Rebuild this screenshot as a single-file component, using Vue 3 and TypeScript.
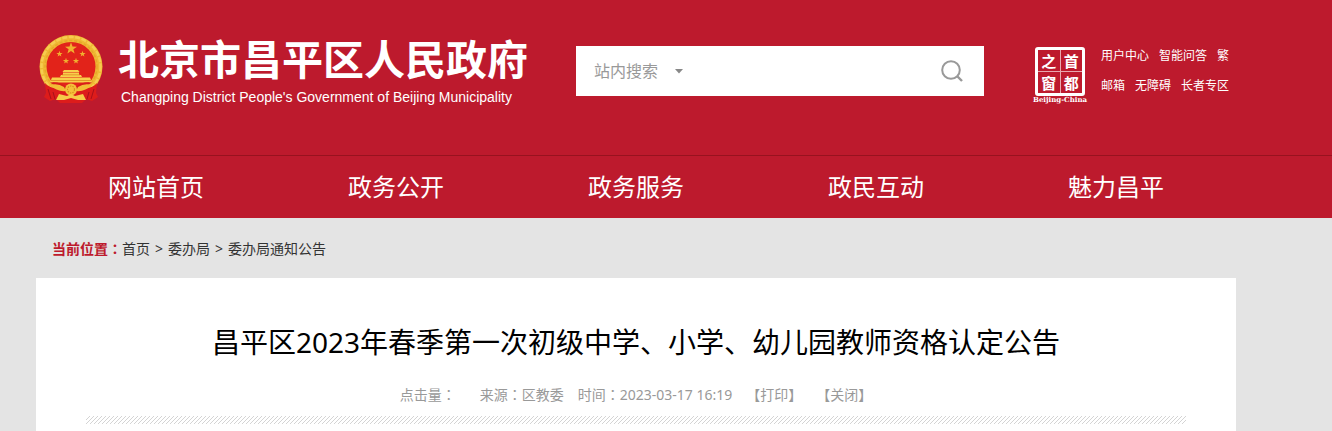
<script setup lang="ts">
import { ref } from 'vue'

interface Crumb {
  label: string
  href: string
}

const scope = ref('site')
const keyword = ref('')

const toolRows: string[][] = [
  ['用户中心', '智能问答', '繁'],
  ['邮箱', '无障碍', '长者专区'],
]

const navItems: string[] = ['网站首页', '政务公开', '政务服务', '政民互动', '魅力昌平']

const crumbs: Crumb[] = [
  { label: '首页', href: '#home' },
  { label: '委办局', href: '#bureaus' },
  { label: '委办局通知公告', href: '#notices' },
]

const sealChars: string[] = ['之', '首', '窗', '都']

const starPath =
  'M0 -5 L1.2 -1.6 L4.8 -1.5 L1.9 0.6 L2.9 4 L0 2 L-2.9 4 L-1.9 0.6 L-4.8 -1.5 L-1.2 -1.6 Z'
</script>

<template>
  <div class="page">
    <header class="header">
      <div class="wrap masthead">
        <a class="brand" href="#home">
          <svg class="emblem" viewBox="0 0 66 70" aria-hidden="true">
            <circle cx="33" cy="32.5" r="31.5" fill="#efb733" />
            <circle cx="33" cy="32.5" r="29.5" fill="none" stroke="#f6cc50" stroke-width="2.5" stroke-dasharray="5 1.5" />
            <circle cx="33" cy="32.5" r="26" fill="none" stroke="#e6a72a" stroke-width="1.5" stroke-dasharray="3 2" />
            <circle cx="33" cy="32.5" r="24.5" fill="#e2231a" />
            <g fill="#f0b02f">
              <path :d="starPath" transform="translate(33 14.5) scale(1.25)" />
              <path :d="starPath" transform="translate(21.5 20) scale(.65)" />
              <path :d="starPath" transform="translate(44.5 20) scale(.65)" />
              <path :d="starPath" transform="translate(28 27) scale(.65)" />
              <path :d="starPath" transform="translate(38 27) scale(.65)" />
            </g>
            <path d="M26 36 H40 L41.5 38 H24.5 Z M25 38.5 H41 V41 H43 L44 43 H22 L23 41 H25 Z M14 43.5 H52 L54 48.5 H12 Z" fill="#f8cf4b" />
            <path d="M24 40.5 H42 V41.3 H24 Z M13 46 H53 V46.8 H13 Z" fill="#dc8420" />
            <path d="M7 49 Q12 55 20 54 L27 56 H39 L46 54 Q54 55 59 49 L58 59 L60 63 L54 67 L48 65 L44 69 H22 L18 65 L12 67 L6 63 L8 59 Z" fill="#dd1c1b" />
            <path d="M12 48.500 Q22 47 28 53 H38 Q44 47 54 48.500 L50 51 Q43 50 39 56 H27 Q23 50 16 51 Z" fill="#d81d1b" />
            <path d="M12 51 Q20 49 26 53 L28 57 Q19 58 12 51 Z M54 51 Q46 49 40 53 L38 57 Q47 58 54 51 Z" fill="#f2bd36" />
            <circle cx="33" cy="55.500" r="6" fill="#f3c03a" />
            <circle cx="33" cy="55.500" r="3.5" fill="none" stroke="#db8e1d" stroke-width="1.2" stroke-dasharray="1.5 1" />
            <path d="M21 60 L29 62 L33 60 L37 62 L45 60 L48 66 L40 66 L33 64 L26 66 L18 66 Z" fill="#f6cb49" />
            <path d="M10 55 L13 65 M56 55 L53 65 M15 58 L17 65 M51 58 L49 65" stroke="#a8101a" stroke-width="1" fill="none" />
          </svg>
          <span class="brand-text">
            <span class="brand-cn">北京市昌平区人民政府</span>
            <span class="brand-en">Changping District People's Government of Beijing Municipality</span>
          </span>
        </a>

        <form class="search" @submit.prevent>
          <select v-model="scope" class="scope" aria-label="搜索范围">
            <option value="site">站内搜索</option>
          </select>
          <svg class="caret" viewBox="0 0 8 5" aria-hidden="true"><path d="M0 0 H8 L4 4.5 Z" fill="#888" /></svg>
          <input v-model="keyword" class="keyword" type="text" aria-label="关键词" />
          <button class="go" type="submit" aria-label="搜索">
            <svg viewBox="0 0 22 22" aria-hidden="true">
              <circle cx="10" cy="10" r="8.8" fill="none" stroke="#999" stroke-width="2" />
              <path d="M16 16 L21 21" stroke="#999" stroke-width="2.4" />
            </svg>
          </button>
        </form>

        <a class="seal" href="#beijing">
          <span class="seal-box">
            <span v-for="c in sealChars" :key="c" class="seal-char">{{ c }}</span>
          </span>
          <span class="seal-name">Beijing-China</span>
        </a>

        <div class="tools">
          <div v-for="(row, i) in toolRows" :key="i" class="tool-row">
            <a v-for="t in row" :key="t" href="#tools">{{ t }}</a>
          </div>
        </div>
      </div>

      <nav class="nav">
        <div class="wrap nav-list">
          <a v-for="n in navItems" :key="n" href="#nav">{{ n }}</a>
        </div>
      </nav>
    </header>

    <main class="wrap">
      <div class="crumbs">
        <strong>当前位置<span class="colon">：</span></strong>
        <template v-for="(c, i) in crumbs" :key="c.label">
          <span v-if="i > 0" class="sep">&gt;</span>
          <a :href="c.href">{{ c.label }}</a>
        </template>
      </div>

      <article class="card">
        <h1>昌平区2023年春季第一次初级中学、小学、幼儿园教师资格认定公告</h1>
        <div class="meta">
          <span class="hits">点击量<span class="colon">：</span></span>
          <span>来源<span class="colon">：</span>区教委</span>
          <span>时间<span class="colon">：</span>2023-03-17 16:19</span>
          <button type="button">【打印】</button>
          <button type="button">【关闭】</button>
        </div>
        <div class="stripe"></div>
      </article>
    </main>
  </div>
</template>

<style>
body {
  margin: 0;
  background: #e4e4e4;
}
</style>

<style scoped>
.page {
  font-family: "Noto Sans", "Noto Sans CJK SC", sans-serif;
  font-size: 14px;
  line-height: 20px;
  color: #333;
}

a {
  color: inherit;
  text-decoration: none;
}

.wrap {
  max-width: 1200px;
  margin-left: 36px;
}

.header {
  background: #bd1a2d;
  color: #fff;
}

.masthead {
  display: flex;
  align-items: flex-start;
  height: 155px;
}

.brand {
  display: flex;
  width: 540px;
  padding-top: 34px;
}

.emblem {
  width: 66px;
  height: 70px;
  margin-left: 2px;
  flex: none;
}

.brand-text {
  display: flex;
  flex-direction: column;
  margin-left: 14px;
  white-space: nowrap;
}

.brand-cn {
  font-family: "Noto Sans CJK SC", sans-serif;
  font-weight: 700;
  font-size: 41px;
  line-height: 46px;
}

.brand-en {
  margin-left: 3px;
  font-family: "Liberation Sans", sans-serif;
  font-size: 14px;
  line-height: 34px;
}

.search {
  display: flex;
  align-items: center;
  width: 408px;
  height: 50px;
  margin-top: 46px;
  background: #fff;
}

.scope {
  appearance: none;
  width: 82px;
  padding: 0 0 0 18px;
  border: 0;
  background: transparent;
  color: #999;
  font-family: inherit;
  font-size: 16px;
  line-height: 24px;
}

.caret {
  width: 8px;
  height: 5px;
  margin-left: 17px;
}

.keyword {
  flex: 1;
  min-width: 0;
  height: 30px;
  border: 0;
  outline: 0;
  background: transparent;
  font-family: inherit;
  font-size: 16px;
}

.go {
  width: 62px;
  height: 48px;
  padding: 0;
  border: 0;
  background: transparent;
}

.go svg {
  display: block;
  width: 22px;
  height: 22px;
  margin: 0 auto 0 19px;
}

.seal {
  display: flex;
  flex-direction: column;
  align-items: center;
  width: 56px;
  margin: 47px 0 0 48px;
}

.seal-box {
  display: grid;
  grid-template-columns: 1fr 1fr;
  gap: 1px;
  box-sizing: border-box;
  width: 50px;
  height: 49px;
  border: 3px solid #fff;
  border-radius: 3px;
  background: #e8a7ae;
}

.seal-char {
  background: #bd1a2d;
  font-family: "Noto Sans CJK SC", sans-serif;
  font-weight: 700;
  font-size: 15px;
  line-height: 21px;
  text-align: center;
}

.seal-name {
  font-family: "DejaVu Serif", serif;
  font-weight: 700;
  font-size: 7px;
  line-height: 8px;
}

.tools {
  margin: 41px 0 0 13px;
  font-size: 12px;
  line-height: 30px;
  white-space: nowrap;
}

.tool-row {
  display: flex;
  gap: 10px;
}

.nav {
  border-top: 1px solid #98121f;
}

.nav-list {
  display: grid;
  grid-template-columns: repeat(5, 1fr);
  text-align: center;
  font-size: 24px;
  line-height: 62px;
}

.crumbs {
  display: flex;
  padding: 21px 16px 19px;
}

.crumbs strong {
  color: #bd1a2d;
}

.sep {
  margin: 0 5px;
}

.colon {
  font-family: "Noto Sans CJK TC", sans-serif;
  line-height: 1;
}

.card {
  padding: 43px 50px 7px;
  background: #fff;
}

h1 {
  margin: 0;
  color: #000;
  font-weight: 400;
  font-size: 28px;
  line-height: 42px;
  text-align: center;
}

.meta {
  display: flex;
  justify-content: center;
  gap: 14px;
  margin-top: 22px;
  color: #999;
}

.hits {
  margin-right: 10px;
}

.meta button {
  padding: 0;
  border: 0;
  background: transparent;
  color: inherit;
  font: inherit;
}

.stripe {
  height: 8px;
  margin-top: 11px;
  background: linear-gradient(135deg, #d4d4d4 0 12%, #fff 12% 38%, #d4d4d4 38% 62%, #fff 62% 88%, #d4d4d4 88%) 0 0 / 4px 4px;
}
</style>
